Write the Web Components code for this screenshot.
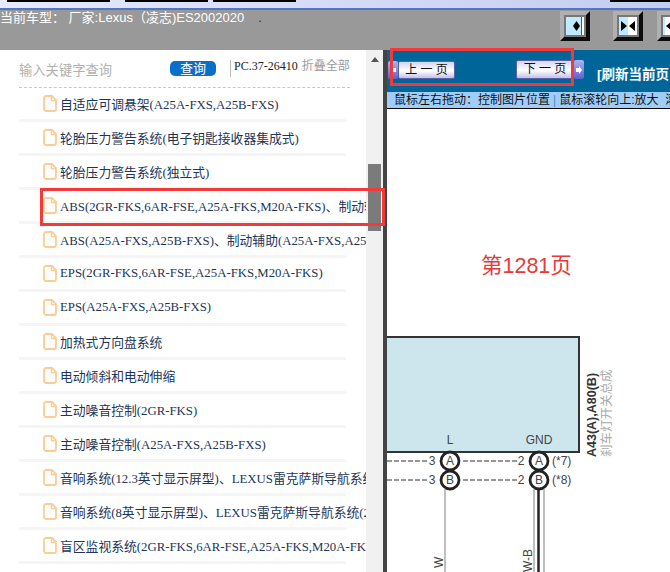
<!DOCTYPE html>
<html lang="zh">
<head>
<meta charset="utf-8">
<title>维修手册</title>
<style>
  html, body { margin: 0; height: 572px; overflow: hidden; background: #fff; }
  body { font-family: "Liberation Sans", "Noto Sans CJK SC", sans-serif; font-size: 13px; }
</style>
</head>
<body>
<manual-page>
  <span slot="car">当前车型： 厂家:Lexus（凌志)ES2002020</span>
  <tool-button slot="tools" mode="one"></tool-button>
  <tool-button slot="tools" mode="two"></tool-button>
  <tool-button slot="tools" mode="left"></tool-button>

  <side-panel slot="side">
    <doc-item>自适应可调悬架(A25A-FXS,A25B-FXS)</doc-item>
    <doc-item>轮胎压力警告系统(电子钥匙接收器集成式)</doc-item>
    <doc-item>轮胎压力警告系统(独立式)</doc-item>
    <doc-item>ABS(2GR-FKS,6AR-FSE,A25A-FKS,M20A-FKS)、制动辅助(2GR-FKS,6AR-FSE)</doc-item>
    <doc-item>ABS(A25A-FXS,A25B-FXS)、制动辅助(A25A-FXS,A25B-FXS)</doc-item>
    <doc-item>EPS(2GR-FKS,6AR-FSE,A25A-FKS,M20A-FKS)</doc-item>
    <doc-item>EPS(A25A-FXS,A25B-FXS)</doc-item>
    <doc-item>加热式方向盘系统</doc-item>
    <doc-item>电动倾斜和电动伸缩</doc-item>
    <doc-item>主动噪音控制(2GR-FKS)</doc-item>
    <doc-item>主动噪音控制(A25A-FXS,A25B-FXS)</doc-item>
    <doc-item>音响系统(12.3英寸显示屏型)、LEXUS雷克萨斯导航系统(2GR-FKS)</doc-item>
    <doc-item>音响系统(8英寸显示屏型)、LEXUS雷克萨斯导航系统(2GR-FKS)</doc-item>
    <doc-item>盲区监视系统(2GR-FKS,6AR-FSE,A25A-FKS,M20A-FKS)</doc-item>
  </side-panel>

  <page-viewer slot="viewer">
    <wiring-diagram></wiring-diagram>
  </page-viewer>
</manual-page>

<script>
class ManualPage extends HTMLElement {
  constructor() {
    super();
    this.attachShadow({ mode: "open" });
    this.shadowRoot.innerHTML = `
      <style>
        :host { display: block; position: relative; width: 670px; height: 572px; overflow: hidden; }
        .strip {
          height: 8px; border-bottom: 2px solid #4f76c8;
          background: linear-gradient(90deg, #e6e9fa, #c3cdef);
          display: flex; align-items: flex-start;
        }
        .strip i { display: block; height: 2px; background: #000; }
        .head {
          height: 40px; background: #999; display: flex; overflow: hidden;
          color: #fff; font-size: 13px;
        }
        .car { width: 560px; flex: none; line-height: 16px; margin-top: 0; white-space: nowrap; }
        .car b { color: #333; font-weight: normal; margin-left: 14px; }
        .tools { display: flex; gap: 23px; padding-top: 1px; flex: none; }
        ::slotted(tool-button[mode="left"]) { margin-left: -9px; }
        .main { display: flex; height: 522px; }
        .over { position: absolute; border: 3px solid #f23a3a; box-sizing: border-box; pointer-events: none; }
        .o1 { left: 390px; top: 48px; width: 184px; height: 38px; }
        .o2 { left: 40px; top: 188px; width: 345px; height: 38px; }
      </style>
      <div class="strip">
        <i style="margin-left:7px;width:103px"></i>
        <i style="margin-left:15px;width:83px"></i>
        <i style="margin-left:5px;width:83px"></i>
        <i style="margin-left:314px;width:60px"></i>
      </div>
      <div class="head">
        <div class="car"><slot name="car"></slot><b>.</b></div>
        <div class="tools"><slot name="tools"></slot></div>
      </div>
      <div class="main">
        <slot name="side"></slot>
        <slot name="viewer"></slot>
      </div>
      <div class="over o1"></div>
      <div class="over o2"></div>
    `;
  }
}

class ToolButton extends HTMLElement {
  constructor() {
    super();
    this.attachShadow({ mode: "open" });
  }

  connectedCallback() {
    const mode = this.getAttribute("mode");
    // 每个按钮的分栏状态不一样，只画箭头和底色
    const faces = {
      one: `<rect width="18" height="18" fill="#bfeaff"/><rect x="15" width="1" height="18" fill="#555"/><rect x="16" width="2" height="18" fill="#fff"/><path d="M7 9l3.500-5 3.500 5-3.500 5z" fill="#000"/>`,
      two: `<rect width="9" height="18" fill="#bfeaff"/><rect x="9" width="9" height="18" fill="#fff"/><path d="M2 4v10l6-5z M16 4v10l-6-5z" fill="#000"/>`,
      left: `<rect width="18" height="18" fill="#fff"/><rect width="2" height="18" fill="#bfeaff"/><path d="M9 4v10L3 9z" fill="#000"/>`
    };
    this.shadowRoot.innerHTML = `
      <style>
        :host { display: block; width: 30px; height: 30px; box-sizing: border-box; flex: none;
          border: 4px solid; border-color: #b0b0b0 #0c0c0c #0c0c0c #b0b0b0; }
        .in { width: 22px; height: 22px; border: 2px solid #777; box-sizing: border-box; overflow: hidden; }
        svg { display: block; width: 18px; height: 18px; }
      </style>
      <div class="in"><svg viewBox="0 0 18 18">${faces[mode]}</svg></div>
    `;
  }
}

class SidePanel extends HTMLElement {
  constructor() {
    super();
    this.attachShadow({ mode: "open" });
    this.shadowRoot.innerHTML = `
      <style>
        :host { display: flex; width: 383px; height: 522px; flex: none; background: #fff; }
        .col { width: 366px; flex: none; overflow: hidden; }
        .search {
          height: 38px; margin: 0 16px 0 19px; box-sizing: border-box;
          border-bottom: 1px dashed #c8c8c8; display: flex; align-items: flex-start; white-space: nowrap;
        }
        .hint { width: 151px; flex: none; color: #b0b0b0; font-size: 13.3px; line-height: 16px; margin-top: 13px; }
        .go {
          width: 46px; height: 15px; flex: none; margin-top: 11px; background: #0a6fc9; color: #fff;
          border-radius: 5px; text-align: center; font-size: 13px; line-height: 15px;
        }
        .sep { width: 1px; height: 17px; flex: none; margin: 10px 3px 0 14px; background: #bbb; }
        .code { font-family: "Liberation Serif", "Noto Sans CJK SC", serif; color: #222; line-height: 16px; margin-top: 8px; font-size: 12px; }
        .fold { color: #999; font-size: 12px; line-height: 16px; margin: 8px 0 0 4px; }
        .bar { width: 17px; flex: none; background: #f1f1f1; position: relative; display: flex; flex-direction: column; align-items: center; }
        .up { width: 0; height: 0; margin-top: 7px; border: 4px solid transparent; border-top: 0; border-bottom: 5px solid #555; border-left-width: 4px; }
        .thumb { width: 13px; height: 67px; margin-top: 102px; background: #7b7b7b; }
      </style>
      <div class="col">
        <div class="search">
          <span class="hint">输入关键字查询</span>
          <span class="go">查询</span>
          <span class="sep"></span>
          <span class="code">PC.37-26410</span>
          <span class="fold">折叠全部</span>
        </div>
        <slot></slot>
      </div>
      <div class="bar"><div class="up"></div><div class="thumb"></div></div>
    `;
  }
}

class DocItem extends HTMLElement {
  constructor() {
    super();
    this.attachShadow({ mode: "open" });
    this.shadowRoot.innerHTML = `
      <style>
        :host { display: block; height: 34px; }
        .row { height: 31px; display: flex; align-items: center; padding-left: 43px; white-space: nowrap; overflow: hidden;
          font-family: "Liberation Serif", "Noto Sans CJK SC", serif; font-size: 12.800px; color: #1c3557; }
        svg { width: 14px; height: 17px; flex: none; margin-right: 3px; }
        .line { height: 3px; margin: 0 20px 0 19px; background: #f5f5f5; }
      </style>
      <div class="row">
        <svg viewBox="0 0 14 17">
          <path d="M3 1h6l4 4v9a2 2 0 0 1-2 2H3a2 2 0 0 1-2-2V3a2 2 0 0 1 2-2z" fill="#fff" stroke="#fdcb95" stroke-width="1.800"/>
          <path d="M8.500 1.500V5.500H13" fill="none" stroke="#fdcb95" stroke-width="1.400"/>
        </svg>
        <slot></slot>
      </div>
      <div class="line"></div>
    `;
  }
}

class PageButton extends HTMLElement {
  constructor() {
    super();
    this.attachShadow({ mode: "open" });
  }

  connectedCallback() {
    const isNext = this.getAttribute("side") === "next";
    const arrow = `<span class="tab"><svg viewBox="0 0 8 10"><path d="${isNext ? "M1 3h3V1l3 4-3 4V7H1z" : "M7 3H4V1L1 5l3 4V7h3z"}" fill="#fff"/></svg></span>`;
    this.shadowRoot.innerHTML = `
      <style>
        :host { display: flex; flex: none; }
        .tab { width: 10px; flex: none; background: linear-gradient(#aeb2f4, #5b62cf); display: flex; align-items: center; justify-content: center; border-radius: 2px; }
        .tab svg { width: 8px; height: 10px; display: block; }
        .face {
          flex: 1; box-sizing: border-box; border: 1px solid #5d62a8; border-radius: 2px;
          background: linear-gradient(#d4d6f6, #fff 55%, #bfc1ea); color: #111;
          font-size: 12px; line-height: 17px; text-align: center; white-space: pre;
        }
      </style>
      ${isNext ? "" : arrow}<div class="face"><slot></slot></div>${isNext ? arrow : ""}
    `;
  }
}

class PageViewer extends HTMLElement {
  constructor() {
    super();
    this.attachShadow({ mode: "open" });
    this.shadowRoot.innerHTML = `
      <style>
        :host { display: flex; flex-direction: column; width: 287px; height: 522px; flex: none; box-sizing: border-box;
          border-left: 4px solid #444; overflow: hidden; }
        .nav { height: 42px; flex: none; background: #006699; display: flex; align-items: flex-start; white-space: nowrap; }
        page-button.prev { width: 67px; height: 18px; margin: 11px 0 0 1px; }
        page-button.next { width: 68px; height: 19px; margin: 10px 0 0 61px; }
        .refresh { color: #fff; font-weight: bold; font-size: 13.500px; line-height: 16px; margin: 17px 0 0 13px; }
        .tip { height: 16px; flex: none; background: #9fcdf8; border-bottom: 1px solid #000; color: #111; font-size: 12px;
          line-height: 16px; padding-left: 7px; white-space: nowrap; overflow: hidden; }
        .tip i { font-style: normal; color: #5d86b8; margin: 0 3px; }
        .body { flex: 1; background: #fff; overflow: hidden; }
      </style>
      <div class="nav">
        <page-button class="prev" side="prev">上 一 页</page-button>
        <page-button class="next" side="next">下 一 页</page-button>
        <span class="refresh">[刷新当前页</span>
      </div>
      <div class="tip">鼠标左右拖动：控制图片位置<i>|</i>鼠标滚轮向上:放大&nbsp;&nbsp;滚轮向下:缩小</div>
      <div class="body"><slot></slot></div>
    `;
  }
}

class WiringDiagram extends HTMLElement {
  constructor() {
    super();
    this.attachShadow({ mode: "open" });
    // 坐标系和截图一致，减去查看区左上角 387,109
    this.shadowRoot.innerHTML = `
      <style>
        :host { display: block; }
        svg { display: block; width: 283px; height: 463px; }
        text { font-family: "Liberation Sans", "Noto Sans CJK SC", sans-serif; fill: #444; font-size: 12px; }
      </style>
      <svg viewBox="387 109 283 463">
        <text x="481" y="273" style="font-size:21.500px;fill:#e8393a">第1281页</text>
        <rect x="380" y="337" width="199" height="115" fill="#cde6ed" stroke="#333" stroke-width="2"/>
        <text x="450" y="444" text-anchor="middle">L</text>
        <text x="539" y="444" text-anchor="middle">GND</text>
        <g stroke="#333" stroke-width="1.200" stroke-dasharray="5 2" fill="none">
          <path d="M387 461H427M387 480H427M463 461H517M463 480H517"/>
        </g>
        <text x="432" y="465" text-anchor="middle">3</text>
        <text x="432" y="484" text-anchor="middle">3</text>
        <text x="521" y="465" text-anchor="middle">2</text>
        <text x="521" y="484" text-anchor="middle">2</text>
        <path d="M445 489V572M534 489V572M544 489V572" stroke="#aaa" stroke-width="1.500" fill="none"/>
        <path d="M538.500 489V572" stroke="#222" stroke-width="2.500" fill="none"/>
        <g fill="#fff" stroke="#222" stroke-width="2.800">
          <circle cx="450" cy="461" r="9"/><circle cx="450" cy="480" r="9"/>
          <circle cx="539" cy="461" r="9"/><circle cx="539" cy="480" r="9"/>
        </g>
        <text x="450" y="465" text-anchor="middle">A</text>
        <text x="450" y="484" text-anchor="middle">B</text>
        <text x="539" y="465" text-anchor="middle">A</text>
        <text x="539" y="484" text-anchor="middle">B</text>
        <text x="552" y="465">(*7)</text>
        <text x="552" y="484">(*8)</text>
        <text transform="translate(596 457) rotate(-90)" style="font-weight:bold;fill:#333;font-size:12.500px">A43(A),A80(B)</text>
        <text transform="translate(611 457) rotate(-90)" style="fill:#aaa;font-size:12.500px">刹车灯开关总成</text>
        <text transform="translate(443 568) rotate(-90)">W</text>
        <text transform="translate(532 572) rotate(-90)">W-B</text>
      </svg>
    `;
  }
}

customElements.define("manual-page", ManualPage);
customElements.define("tool-button", ToolButton);
customElements.define("side-panel", SidePanel);
customElements.define("doc-item", DocItem);
customElements.define("page-button", PageButton);
customElements.define("page-viewer", PageViewer);
customElements.define("wiring-diagram", WiringDiagram);
</script>
</body>
</html>
